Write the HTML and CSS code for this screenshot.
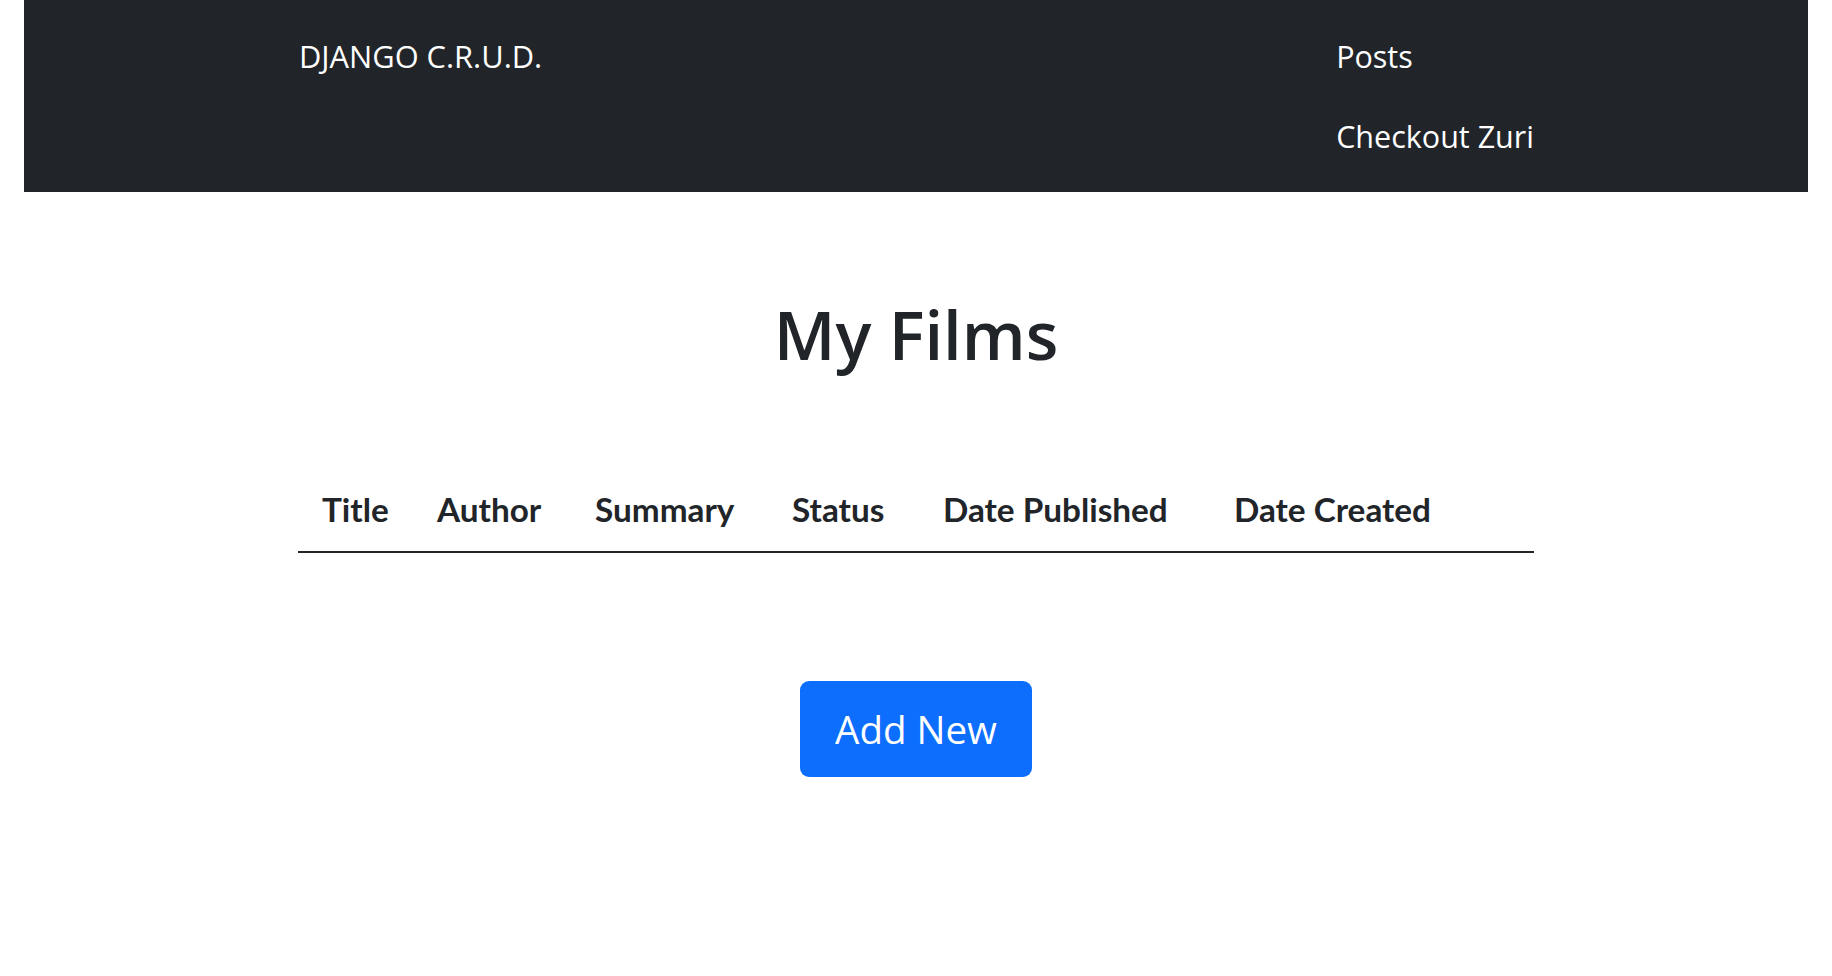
FILE: index.html
```html
<!DOCTYPE html>
<html lang="en">
<head>
<meta charset="utf-8">
<title>Django C.R.U.D.</title>
<link rel="stylesheet" href="styles.css">
</head>
<body>
<nav class="navbar">
  <div class="container nav-inner">
    <a class="brand" href="#">DJANGO C.R.U.D.</a>
    <ul class="nav-links">
      <li><a class="nav-link" href="#">Posts</a></li>
      <li><a class="nav-link" href="#">Checkout Zuri</a></li>
    </ul>
  </div>
</nav>
<main class="container main">
  <h1 class="page-title">My Films</h1>
  <table class="films">
    <thead>
      <tr>
        <th class="c-title">Title</th>
        <th class="c-author">Author</th>
        <th class="c-summary">Summary</th>
        <th class="c-status">Status</th>
        <th class="c-published">Date Published</th>
        <th class="c-created">Date Created</th>
      </tr>
    </thead>
    <tbody></tbody>
  </table>
  <div class="actions">
    <a class="btn-primary" href="#">Add New</a>
  </div>
</main>
</body>
</html>
```
FILE: styles.css
```css
* { box-sizing: border-box; }

body {
  margin: 0;
  font-family: "Open Sans", "Noto Sans", sans-serif;
  color: #212529;
  background: #fff;
}

a { text-decoration: none; }

.container {
  width: 1236px;
  margin: 0 auto;
}

.navbar {
  margin: 0 24px;
  height: 192px;
  background: #212529;
  padding: 16px 0;
}

.nav-inner {
  display: flex;
  justify-content: space-between;
  align-items: flex-start;
}

.brand {
  display: block;
  color: #fff;
  font-size: 30.8px;
  line-height: 50px;
  padding: 15px 0;
  margin-left: 1px;
}

.nav-links {
  list-style: none;
  margin: 0;
  padding: 0;
  display: flex;
  flex-direction: column;
}

.nav-link {
  display: block;
  color: #fff;
  font-size: 30.5px;
  line-height: 50px;
  padding: 15px 0;
}

.main {
  padding-top: 101px;
}

.page-title {
  margin: 0 0 96px;
  text-align: center;
  font-size: 67px;
  font-weight: 600;
  line-height: 82.6px;
}

.films {
  width: 100%;
  border-collapse: collapse;
  table-layout: fixed;
}

.films th {
  font-family: "Lato", sans-serif;
  font-weight: 700;
  font-size: 33.3px;
  line-height: 50px;
  text-align: left;
  padding: 12.5px 24px 16.5px 24px;
  border-bottom: 2px solid #212529;
  white-space: nowrap;
}

.c-title { width: 115px; }
.c-author { width: 158px; }
.c-summary { width: 197px; }
.c-status { width: 151px; }
.c-published { width: 291px; }
.c-created { width: 324px; }

.actions {
  display: flex;
  justify-content: center;
  padding-top: 128px;
}

.btn-primary {
  display: block;
  background: #0d6efd;
  color: #fff;
  font-size: 38.5px;
  line-height: 56px;
  padding: 20px 35px;
  border-radius: 9px;
}
```
